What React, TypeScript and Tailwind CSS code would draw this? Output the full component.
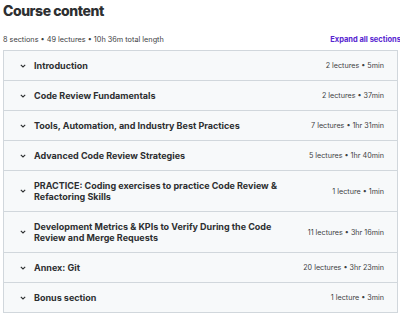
import React from 'react';

interface Section {
  title: string;
  meta: string;
}

const sections: Section[] = [
  { title: 'Introduction', meta: '2 lectures • 5min' },
  { title: 'Code Review Fundamentals', meta: '2 lectures • 37min' },
  { title: 'Tools, Automation, and Industry Best Practices', meta: '7 lectures • 1hr 31min' },
  { title: 'Advanced Code Review Strategies', meta: '5 lectures • 1hr 40min' },
  { title: 'PRACTICE: Coding exercises to practice Code Review & Refactoring Skills', meta: '1 lecture • 1min' },
  { title: 'Development Metrics & KPIs to Verify During the Code Review and Merge Requests', meta: '11 lectures • 3hr 16min' },
  { title: 'Annex: Git', meta: '20 lectures • 3hr 23min' },
  { title: 'Bonus section', meta: '1 lecture • 3min' },
];

const Chevron = () => (
  <svg width="6" height="4" viewBox="0 0 6 4" className="shrink-0 text-[#2d2f31]">
    <path d="M0.8 0.8l2.2 2.2 2.2-2.2" fill="none" stroke="currentColor" strokeWidth="1.1" />
  </svg>
);

export default function App() {
  return (
    <div
      className="w-[400px] h-[313px] overflow-hidden bg-white pl-[3px] text-[#2d2f31]"
      style={{ fontFamily: 'Inter, "Noto Sans", sans-serif' }}
    >
      {/* header */}
      <h2 className="pt-[2px] text-[14px] font-extrabold leading-[18px] tracking-[-0.45px]">Course content</h2>
      <div className="mt-[14px] flex items-center justify-between leading-[12px]">
        <span className="text-[7.3px] text-[#3e4143]">8 sections • 49 lectures • 10h 36m total length</span>
        <span className="text-[7.5px] font-bold text-[#5624d0] -mr-[1px]">Expand all sections</span>
      </div>

      {/* sections */}
      <div className="mt-[4px] w-[395px] border border-[#d1d7dc] bg-[#f7f9fa]">
        {sections.map((s, i) => (
          <div
            key={i}
            className={`flex items-center gap-[8px] py-[9px] pl-[16px] pr-[13px] ${i > 0 ? 'border-t border-[#d1d7dc]' : ''}`}
          >
            <Chevron />
            <div className="flex-1 text-[9px] font-bold leading-[11px] pr-[24px]">{s.title}</div>
            <div className="text-[7.2px] leading-[11px] text-[#3e4143] whitespace-nowrap">{s.meta}</div>
          </div>
        ))}
      </div>
    </div>
  );
}
